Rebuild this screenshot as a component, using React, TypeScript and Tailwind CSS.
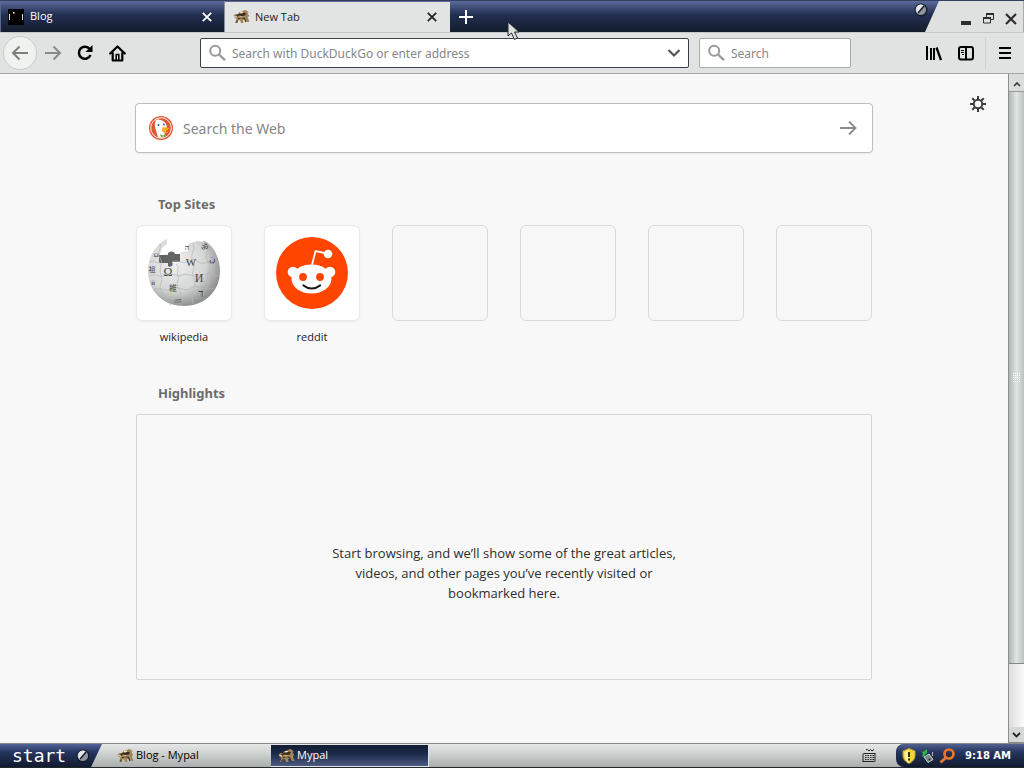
import type { ReactNode } from "react";

function MypalIcon() {
  return (
    <svg width="17" height="16" viewBox="0 0 17 16" aria-hidden="true">
      <path d="M.5 6.500 2.500 5l2.500 0 1.500-2 3-.5 2-1.500 2 .5 1 2 1 2.500-.5 3 1.500 4h-2.500L12 10.500l-2 .5.5 3H8l-1-3-2 .5L4.500 14H2l1.500-4-1.500-1Z" fill="#a3865a" />
      <path d="M3 6.500 6 4.500l2 .5 3-1.500 2 1-1 2-3 .5-3-.5-2 1.500Z" fill="#3b2f22" />
      <path d="M5 10 8 8.500l3.500 1 1.500 3.500M3.500 13.500l1-2" fill="none" stroke="#43331f" strokeWidth="1.200" />
      <path d="M1.500 7.500 4 8M7 3.500h3M6.500 8h3" stroke="#ecdfc4" strokeWidth="1" />
      <path d="M13.500 2 15.500 3.500M15 5.500l.5 2" stroke="#8c877d" strokeWidth="1" />
    </svg>
  );
}

function Orb() {
  return (
    <svg width="14" height="14" viewBox="0 0 14 14" aria-hidden="true">
      <circle cx="7" cy="7" r="6.500" fill="#11192b" />
      <circle cx="6.800" cy="6.800" r="5.300" fill="#8d949c" />
      <path d="M2 7a5 5 0 0 1 7.500-4.800L4 10.500A5 5 0 0 1 2 7Z" fill="#e3e7e8" />
      <path d="m4 10 6-7" stroke="#151b27" strokeWidth="1.400" />
    </svg>
  );
}

function CloseIcon() {
  return (
    <svg width="10" height="10" viewBox="0 0 10 10" aria-hidden="true">
      <path d="m.8.8 8.400 8.400M9.200.8.8 9.200" stroke="currentColor" strokeWidth="1.800" />
    </svg>
  );
}

function SearchIcon() {
  return (
    <svg className="shrink-0" width="18" height="18" viewBox="0 0 18 18" aria-hidden="true">
      <circle cx="6.200" cy="6.700" r="5" fill="none" stroke="#989999" strokeWidth="2" />
      <path d="m10 10.500 6 5.700" stroke="#989999" strokeWidth="2.400" />
    </svg>
  );
}

function Tab({ icon, title, active }: { icon: ReactNode; title: string; active?: boolean }) {
  return (
    <div
      className={
        active
          ? "mt-px flex w-[225px] items-center bg-[#e2e4e4] pr-[13px] pl-2 text-[#222]"
          : "flex w-[225px] items-center border-r border-l border-r-[#8790a8] border-l-[#59668e] pr-3 pl-[7px] text-white"
      }
    >
      <span className="flex w-[22px] shrink-0">{icon}</span>
      <button className="flex-1 text-left">{title}</button>
      <button aria-label={`Close ${title}`}><CloseIcon /></button>
    </div>
  );
}

function TabStrip() {
  return (
    <div className="flex h-8 border-t border-[#35405f] bg-[#dfe1e1] font-['Open_Sans','Noto_Sans',sans-serif] text-[11px]">
      <div className="flex flex-1 bg-linear-to-b from-[#5b6a9c] via-[#222f51] via-45% to-[#131d2e] [clip-path:polygon(0_0,100%_0,calc(100%-14px)_100%,0_100%)]">
        <Tab
          title="Blog"
          icon={
            <svg width="16" height="16" viewBox="0 0 16 16" aria-hidden="true">
              <path d="M0 0h16v16H0z" fill="#000" />
              <path d="M1.500 5v6M14.500 5v6" stroke="#ddd" />
              <path d="M5 3h1.500v1.500H5z" fill="#fff" />
            </svg>
          }
        />
        <Tab title="New Tab" icon={<MypalIcon />} active />
        <button className="flex w-8 items-center justify-center text-white" aria-label="Open a new tab">
          <svg width="14" height="14" viewBox="0 0 14 14"><path d="M7 0v14M0 7h14" stroke="currentColor" strokeWidth="2" /></svg>
        </button>
        <span className="mt-0.5 mr-[11px] ml-auto"><Orb /></span>
      </div>
      <div className="flex w-[85px] shrink-0 items-center justify-end gap-[11px] border-r border-[#aaa] pt-1 pr-1.5 text-[#2d2d2d]">
        <button aria-label="Minimize">
          <svg width="11" height="12" viewBox="0 0 11 12"><path d="M0 8h10v4H0z" fill="currentColor" /></svg>
        </button>
        <button aria-label="Restore">
          <svg width="11" height="11" viewBox="0 0 11 11" fill="none" stroke="currentColor"><path d="M3.500 4V1h7v5.500H8M.5 4.500h7V10h-7z" /><path d="M3 1h8M0 5h8" strokeWidth="2" /></svg>
        </button>
        <button aria-label="Close window">
          <svg width="12" height="12" viewBox="0 0 12 12"><path d="m1 1 10 10M11 1 1 11" stroke="currentColor" strokeWidth="2.200" /></svg>
        </button>
      </div>
    </div>
  );
}

function Toolbar() {
  return (
    <div className="flex h-[42px] items-center border-t border-b border-t-[#c4c6c8] border-b-[#a5a8a9] bg-[#e1e3e3] pr-3 pl-[3px]">
      <button className="flex size-[34px] items-center justify-center rounded-full border border-[#c9cbc8] bg-[#f0f2ef] text-[#7e7f7f]" aria-label="Back">
        <svg width="18" height="16" viewBox="0 0 18 16" fill="none" stroke="currentColor" strokeWidth="2"><path d="M17 8H2M8.500 1.500 2 8l6.500 6.500" /></svg>
      </button>
      <button className="ml-2 text-[#888989]" aria-label="Forward">
        <svg width="17" height="16" viewBox="0 0 17 16" fill="none" stroke="currentColor" strokeWidth="2"><path d="M0 8h15M8.500 1.500 15 8l-6.500 6.500" /></svg>
      </button>
      <button className="ml-[15px] text-black" aria-label="Reload">
        <svg width="17" height="16" viewBox="0 0 17 16" fill="none" stroke="currentColor"><path d="M13 4.500A6 6 0 1 0 13.500 10" strokeWidth="2.500" /><path d="M15.500 0v7H8.500Z" fill="currentColor" stroke="none" /></svg>
      </button>
      <button className="ml-[15px] text-black" aria-label="Home">
        <svg width="17" height="17" viewBox="0 0 17 17" fill="none" stroke="currentColor" strokeWidth="2.200" strokeLinejoin="round"><path d="m1.200 8.500 7.300-7 7.300 7M3.700 8v7.500h9.600V8" strokeLinecap="round" /><path d="M7.200 15V9.500h2.600V15" strokeWidth="1.600" /></svg>
      </button>
      <label className="ml-[74px] flex h-[30px] min-w-0 flex-1 items-center rounded-xs border border-[#393e4b] bg-white pr-[7px] pl-2">
        <SearchIcon />
        <input className="ml-[5px] min-w-0 flex-1 pt-0.5 text-[12px] text-[#333] outline-none placeholder:text-[#868787]" aria-label="Address" placeholder="Search with DuckDuckGo or enter address" />
        <button aria-label="Show history">
          <svg width="14" height="10" viewBox="0 0 14 10" fill="none" stroke="#555" strokeWidth="2.200"><path d="m1.500 2 5.500 5.500L12.500 2" /></svg>
        </button>
      </label>
      <label className="ml-2.5 flex h-[30px] w-[152px] items-center rounded-xs border border-[#a9abac] bg-white pl-2">
        <SearchIcon />
        <input className="ml-[5px] w-24 pt-0.5 text-[12px] outline-none placeholder:text-[#868787]" aria-label="Search" placeholder="Search" />
      </label>
      <button className="ml-[75px]" aria-label="Library">
        <svg width="16" height="16" viewBox="0 0 16 16" stroke="#000" strokeWidth="2"><path d="M1 1v14M5 3v12M8 3v12" /><path d="m10.500 2.500 4.500 12.500" strokeWidth="2.300" /></svg>
      </button>
      <button className="ml-4" aria-label="Sidebars">
        <svg width="16" height="16" viewBox="0 0 16 16" fill="none" stroke="#000"><rect x="1" y="2" width="14" height="12.500" rx="2" strokeWidth="2" /><path d="M8 2v12" strokeWidth="2" /><path d="M3 5.500h3M3 7.500h3M4 9.500h2" /></svg>
      </button>
      <span className="ml-[11px] h-8 border-l border-[#d1d3d3]" />
      <button className="ml-3" aria-label="Open menu">
        <svg width="14" height="14" viewBox="0 0 14 14"><path d="M1 2h12M1 7h12M1 12h12" stroke="#000" strokeWidth="2" /></svg>
      </button>
    </div>
  );
}

function DuckIcon() {
  return (
    <svg width="26" height="26" viewBox="0 0 26 26" aria-hidden="true">
      <circle cx="13" cy="13" r="12" fill="#de5833" />
      <circle cx="13" cy="13" r="10.300" fill="none" stroke="#fff" strokeWidth=".9" />
      <path d="M9 4.500c-1.500 0-2 1-1 1.500-2 2-1 6.500 0 9.500l2 6.800c2 .7 5 .5 7-.3L16.500 17c2-1 2.500-4 2-6.500C18 7 14 4.500 9 4.500Z" fill="#fff" />
      <path d="M14.500 12.500c2-.5 4.500 0 7 .5-1 2-3 2.500-5 2.500 1 1.500 3 1 4 1.500-2 1.700-6 1-6.500-1.500Z" fill="#fda913" />
      <path d="m12 19 3 1.500 3-1.500v3.500l-3-1-2 1Z" fill="#74ad58" />
      <circle cx="10.500" cy="10" r="1" fill="#28598a" />
      <circle cx="16" cy="9.500" r=".9" fill="#28598a" />
    </svg>
  );
}

function WikipediaGlobe() {
  return (
    <svg width="76" height="76" viewBox="0 0 76 76" aria-hidden="true">
      <defs>
        <radialGradient id="globe" cx="38%" cy="36%" r="65%">
          <stop offset="0" stopColor="#f0f0f0" />
          <stop offset=".65" stopColor="#d4d5d5" />
          <stop offset="1" stopColor="#909292" />
        </radialGradient>
      </defs>
      <path d="M21 4C9 10 2 22 2 36c0 20 15 35 36 35s36-15 36-35C74 24 68 11 59 6l-4 1-3-1-8 2-3 3 1 5-7 1-3 4-8-2-10 1 2-7 5-4Z" fill="url(#globe)" />
      <path d="M13 20h9c-1-4 6-5 7-1h5v8h-8c2 3-1 6-4 4v-3h-9Z" fill="#626464" />
      <g fill="none" stroke="#b3b5b5" strokeWidth=".7">
        <path d="M14 9c2 5-4 9 0 14s-2 10 1 17-4 11 1 17 2 8 9 13M30 29c5 3 0 6 2 11s-3 7 1 14-2 10 2 16M47 9c3 7-4 10 0 17s-3 10 1 18-4 9-1 25M62 10c1 8-5 10 0 17s-3 12 0 18-4 9-5 16" />
        <path d="M4 27c5-3 7 3 10 0M26 27c6-3 8 2 14 0s7-4 12 0 13-3 20 0M3 41c7-4 10 3 16-1s12 3 17 0 13 4 20 0 13 3 17 0M8 55c7-4 12 3 18-1s13 4 19-1 17 4 23 0" />
      </g>
      <g fill="#424545" fontFamily="Liberation Serif, Noto Sans CJK JP, serif" fontSize="11" textAnchor="middle">
        <text x="22" y="41" fontSize="12">Ω</text><text x="45" y="31">W</text><text x="53" y="47" fontSize="12">И</text><text x="27" y="56" fontSize="8">維</text><text x="55" y="62">ד</text><text x="66" y="27" fontSize="9">ن</text><text x="41" y="15" fontSize="8">ה</text><text x="58" y="15" fontSize="8">ॐ</text><text x="6" y="37" fontSize="7">祖</text><text x="7" y="50" fontSize="7">й</text><text x="10" y="22" fontSize="7">Ω</text><text x="32" y="68" fontSize="6">ওয়</text>
      </g>
    </svg>
  );
}

function RedditIcon() {
  return (
    <svg width="74" height="74" viewBox="0 0 74 74" aria-hidden="true">
      <circle cx="37" cy="37" r="36" fill="#ff4500" />
      <g fill="#fff"><circle cx="18" cy="36" r="5.300" /><circle cx="55" cy="36" r="5.300" /><ellipse cx="36.500" cy="43" rx="20" ry="14.500" /><circle cx="53" cy="18" r="4.300" /></g>
      <path d="m37 29 3.500-14L52 17.500" fill="none" stroke="#fff" strokeWidth="1.800" />
      <circle cx="28" cy="41" r="3.900" fill="#ff4500" /><circle cx="45" cy="41" r="3.900" fill="#ff4500" />
      <path d="M28.500 49.500c5 4 11.500 4 16.500 0" fill="none" stroke="#151515" strokeWidth="2.200" strokeLinecap="round" />
    </svg>
  );
}

const sites = [
  { name: "wikipedia", icon: <WikipediaGlobe /> },
  { name: "reddit", icon: <RedditIcon /> },
];

function NewTabPage() {
  return (
    <main className="relative min-w-0 flex-1 bg-[#f8f8f8] px-4 pt-[29px] pb-8">
      <button className="absolute top-[22px] right-[22px]" aria-label="Customize page">
        <svg width="16" height="16" viewBox="0 0 16 16" fill="none" stroke="#3d3d3d">
          <circle cx="8" cy="8" r="4.200" strokeWidth="1.900" />
          <path d="M8 0v3M8 13v3M0 8h3M13 8h3M2.300 2.300l2.200 2.200M11.500 11.500l2.200 2.200M2.300 13.700l2.200-2.200M11.500 4.500l2.200-2.200" strokeWidth="2" />
        </svg>
      </button>
      <div className="mx-auto max-w-[736px]">
        <form className="-mx-px flex h-[50px] items-center rounded-sm border border-[#bdbdbd] bg-white pr-[15px] pl-3 shadow-xs">
          <DuckIcon />
          <input className="ml-[9px] min-w-0 flex-1 text-[14px] outline-none placeholder:text-[#858585]" aria-label="Search the Web" placeholder="Search the Web" />
          <button type="button" aria-label="Search">
            <svg width="18" height="16" viewBox="0 0 18 16" fill="none" stroke="#8b8b8b" strokeWidth="1.800"><path d="M1 8h15M10 1.500 16.500 8 10 14.500" /></svg>
          </button>
        </form>
        <h2 className="mt-[41px] pl-[22px] text-[13px] leading-5 font-bold text-[#6c6c6c]">Top Sites</h2>
        <ul className="mt-[11px] grid grid-cols-6 gap-8 text-center font-['Open_Sans','Noto_Sans',sans-serif] text-[11px] leading-4 text-[#1b1b1b]">
          {sites.map((site) => (
            <li key={site.name}>
              <a href={`#${site.name}`}>
                <span className="flex h-24 items-center justify-center rounded-md border border-[#e9e9e9] bg-white shadow-xs">{site.icon}</span>
                <span className="mt-2 block">{site.name}</span>
              </a>
            </li>
          ))}
          {[1, 2, 3, 4].map((slot) => (
            <li key={slot} className="h-24 rounded-md border border-[#dadada]" />
          ))}
        </ul>
        <h2 className="mt-[38px] pl-[22px] text-[13px] leading-5 font-bold text-[#6c6c6c]">Highlights</h2>
        <section className="mt-[11px] min-h-[266px] rounded-xs border border-[#d7d7d7] px-4 pt-32">
          <p className="mx-auto max-w-[350px] text-center font-['Open_Sans','Noto_Sans',sans-serif] text-[13px] leading-5 text-[#2d2d2d]">
            Start browsing, and we’ll show some of the great articles, videos, and other pages you’ve recently visited or bookmarked here.
          </p>
        </section>
      </div>
    </main>
  );
}

function Scrollbar() {
  return (
    <div className="flex w-4 shrink-0 flex-col border-l border-[#8e8e8e] bg-linear-to-r from-[#dedede] to-[#fafafa]">
      <button className="flex h-[18px] items-center justify-center border-b border-[#999] bg-[#dadddc] pt-1" aria-label="Scroll up">
        <svg width="8" height="5" viewBox="0 0 8 5" fill="none" stroke="#333" strokeWidth="1.600"><path d="m1 4 3-3 3 3" /></svg>
      </button>
      <div className="flex flex-9 items-center justify-center border-b border-[#888] bg-linear-to-r from-[#b0b6b5] via-[#e1e5e3] to-[#b9c3c1]">
        <svg width="7" height="9" viewBox="0 0 7 9" stroke="#fff" strokeDasharray="1 1"><path d="M0 .5h7M0 2.500h7M0 4.500h7M0 6.500h7M0 8.500h7" /></svg>
      </div>
      <div className="flex-1" />
      <button className="flex h-4 items-center justify-center border-b border-[#888] bg-[#d4d7d6]" aria-label="Scroll down">
        <svg width="9" height="6" viewBox="0 0 9 6" fill="none" stroke="#222" strokeWidth="1.800"><path d="m1 1 3.500 3.500L8 1" /></svg>
      </button>
    </div>
  );
}

function Taskbar() {
  return (
    <footer className="flex h-[25px] items-stretch border-t border-b border-t-[#85898a] border-b-[#222729] bg-linear-to-b from-[#e6e8e7] via-[#c9cdcb] to-[#a9adab] font-['Open_Sans','Noto_Sans',sans-serif] text-[11px]">
      <button className="flex w-[102px] items-center bg-linear-to-b from-[#536398] via-[#263660] via-35% to-[#111a2e] pl-3 text-white [clip-path:polygon(0_0,100%_0,calc(100%-11px)_100%,0_100%)]">
        <span className="w-16 text-left font-['DejaVu_Sans_Mono',monospace] text-[18px] leading-5">start</span>
        <Orb />
      </button>
      <button className="flex w-[154px] items-center gap-0.5 pl-[15px] text-black"><MypalIcon />Blog - Mypal</button>
      <button className="mt-px ml-[15px] flex w-[158px] items-center gap-0.5 border-r border-b border-[#e1e5ea] bg-linear-to-b from-[#131d32] via-[#1b2948] via-40% to-[#4b5a80] pl-[7px] text-white"><MypalIcon />Mypal</button>
      <button className="ml-auto px-5" aria-label="Keyboard">
        <svg width="14" height="15" viewBox="0 0 14 15" fill="none" stroke="#222"><path d="M4 1.500h1.500L7 3l1.500-1.500L10 3l2-1.500M1.500 5.500h12M.5 13.500h12" /><path d="M1 5.500v8M13 5.500v8" /><path d="M3 7.500h10M3 9.500h10M3 11.500h10" strokeWidth="1.200" strokeDasharray="1.500 1" /></svg>
      </button>
      <div className="flex w-[128px] items-center gap-[3px] rounded-l-lg border-l border-[#232d49] bg-linear-to-b from-[#52618f] via-[#263660] via-35% to-[#111a2e] pl-1 text-white">
        <svg width="16" height="16" viewBox="0 0 16 16" aria-hidden="true"><path d="M8 .5 14 3v4.500c0 4-3 6.500-6 8-3-1.500-6-4-6-8V3Z" fill="#f5d532" stroke="#b5a043" /><path d="M8 2v13c-2.500-1.500-4.500-3.500-4.500-7V4Z" fill="#fff18b" /><path d="M8 4v5M8 10.500v2" stroke="#342b09" strokeWidth="2" /></svg>
        <svg width="16" height="16" viewBox="0 0 16 16" aria-hidden="true"><path d="m4 9 5-3 4 5.500-5 3Z" fill="#7d8786" stroke="#c2cdca" /><path d="M12.500 4v4" stroke="#aeb9b8" /><path d="m1 3 2 1 4-3v4l-2 1.500L4 9 2 8l1-2.500Z" fill="#28bd40" /><circle cx="9.500" cy="11.500" r="1" fill="#20282a" /></svg>
        <svg width="17" height="16" viewBox="0 0 17 16" aria-hidden="true"><circle cx="10" cy="6" r="4.500" fill="none" stroke="#ec7528" strokeWidth="2.700" /><path d="m7 9.500-5.500 5" stroke="#ec7528" strokeWidth="3" /></svg>
        <time className="ml-1.5 font-['DejaVu_Sans','Noto_Sans',sans-serif] text-[10px] font-bold">9:18 AM</time>
      </div>
    </footer>
  );
}

export default function App() {
  return (
    <div className="relative flex min-h-screen flex-col font-['Noto_Sans','Noto_Sans_CJK_JP',sans-serif]">
      <header>
        <TabStrip />
        <Toolbar />
      </header>
      <div className="flex flex-1">
        <NewTabPage />
        <Scrollbar />
      </div>
      <Taskbar />
      <svg className="pointer-events-none absolute top-[21px] left-[507px]" width="13" height="20" viewBox="0 0 13 20" aria-hidden="true">
        <path d="M1 1v14l3.500-3 3 6.500 3-1.500-3-6H12Z" fill="#dce1df" stroke="#242a30" />
      </svg>
    </div>
  );
}
